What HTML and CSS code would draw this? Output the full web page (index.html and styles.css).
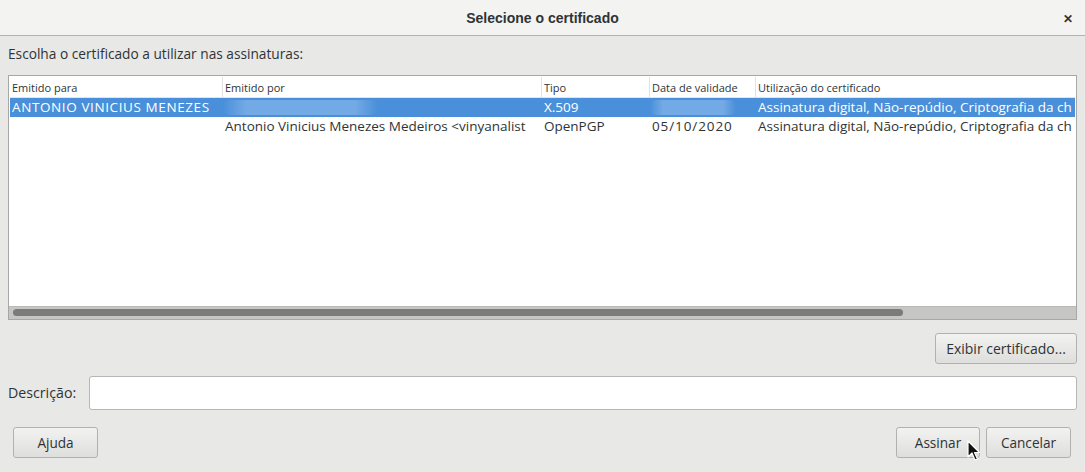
FILE: index.html
```html
<!DOCTYPE html>
<html lang="pt">
<head>
<meta charset="utf-8">
<title>Selecione o certificado</title>
<link rel="stylesheet" href="styles.css">
</head>
<body>
<div class="window">
  <header class="titlebar">
    <span class="title">Selecione o certificado</span>
    <span class="close">✕</span>
  </header>
  <main class="content">
    <div class="prompt">Escolha o certificado a utilizar nas assinaturas:</div>
    <div class="table">
      <div class="thead">
        <div class="c c1">Emitido para</div>
        <div class="c c2">Emitido por</div>
        <div class="c c3">Tipo</div>
        <div class="c c4">Data de validade</div>
        <div class="c c5">Utilização do certificado</div>
      </div>
      <div class="row selected">
        <div class="c c1"><span class="caps">ANTONIO VINICIUS MENEZES</span></div>
        <div class="c c2"><span class="blur b2"></span></div>
        <div class="c c3">X.509</div>
        <div class="c c4"><span class="blur b4"></span></div>
        <div class="c c5">Assinatura digital, Não-repúdio, Criptografia da ch</div>
      </div>
      <div class="row">
        <div class="c c1"></div>
        <div class="c c2">Antonio Vinicius Menezes Medeiros &lt;vinyanalist</div>
        <div class="c c3">OpenPGP</div>
        <div class="c c4"><span class="date">05/10/2020</span></div>
        <div class="c c5">Assinatura digital, Não-repúdio, Criptografia da ch</div>
      </div>
      <div class="fill"></div>
      <div class="hscroll"><div class="thumb"></div></div>
    </div>
    <div class="actions">
      <button class="btn btn-view">Exibir certificado...</button>
    </div>
    <div class="desc">
      <label class="desc-label">Descrição:</label>
      <div class="input"></div>
    </div>
    <div class="footer">
      <button class="btn btn-help">Ajuda</button>
      <div class="spacer"></div>
      <button class="btn btn-sign">Assinar</button>
      <button class="btn btn-cancel">Cancelar</button>
    </div>
  </main>
  <svg class="cursor" width="14" height="22" viewBox="0 0 14 22"><path d="M1 1 L1 17 L5 13 L8 20 L10.5 19 L7.5 12.5 L12.5 12.5 Z" fill="#111" stroke="#fff" stroke-width="1.2" stroke-linejoin="round"/></svg>
</div>
</body>
</html>
```
FILE: styles.css
```css
* { box-sizing: border-box; }
html, body { margin: 0; padding: 0; }
body {
  width: 1085px;
  height: 472px;
  overflow: hidden;
  font-family: "Open Sans", "Noto Sans", sans-serif;
  color: #2e3436;
  background: #e8e8e7;
}
.window {
  position: relative;
  width: 1085px;
  height: 472px;
  display: flex;
  flex-direction: column;
}
.titlebar {
  height: 36px;
  flex: none;
  background: #f3f3f2;
  border-bottom: 1px solid #b3b3b1;
  display: flex;
  align-items: center;
  justify-content: center;
  position: relative;
}
.title {
  font-family: "Liberation Sans", sans-serif;
  font-weight: bold;
  font-size: 14px;
  color: #2e3436;
}
.close {
  position: absolute;
  right: 12px;
  top: 10px;
  font-size: 12px;
  font-weight: bold;
  color: #2e3436;
}
.content {
  flex: 1;
  display: flex;
  flex-direction: column;
  padding: 0 8px;
}
.prompt {
  font-size: 13.7px;
  height: 39px;
  line-height: 36px;
  color: #2e3436;
}
.table {
  height: 245px;
  border: 1px solid #a7a7a5;
  background: #fff;
  display: flex;
  flex-direction: column;
  padding: 1px 1px 0 1px;
}
.thead {
  display: flex;
  height: 21px;
  border-bottom: 1px solid #e4e4e2;
  font-size: 11px;
  color: #2e3436;
}
.thead .c {
  line-height: 21px;
  border-right: 1px solid #e2e2e0;
  padding-left: 2px;
}
.thead .c5 { border-right: none; }
.row {
  display: flex;
  height: 19px;
  font-size: 13.5px;
  line-height: 19px;
  color: #2e3436;
}
.row .c { padding-left: 2px; }
.row.selected {
  background: #4a8fd9;
  color: #fff;
}
.caps { letter-spacing: 0.6px; }
.date { letter-spacing: 0.9px; }
.c { white-space: nowrap; overflow: hidden; flex: none; position: relative; }
.c1 { width: 213px; }
.c2 { width: 319px; }
.c3 { width: 108px; }
.c4 { width: 106px; }
.c5 { flex: 1; }
.blur {
  position: absolute;
  top: 2px;
  height: 15px;
  border-radius: 6px;
  background: linear-gradient(90deg, rgba(140,185,235,0.0), rgba(120,172,230,0.9) 15%, rgba(120,172,230,0.9) 85%, rgba(140,185,235,0));
}
.b2 { left: 0; width: 155px; }
.b4 { left: 0; width: 86px; }
.fill { flex: 1; }
.hscroll {
  height: 13px;
  background: #c6c6c4;
  border-top: 1px solid #b9b9b7;
  margin: 0 -1px;
  padding: 2px 0 0 4px;
}
.thumb {
  width: 890px;
  height: 7px;
  background: #7b7c7a;
  border-radius: 4px;
}
.btn {
  font-family: "Open Sans", "Noto Sans", sans-serif;
  font-size: 13.6px;
  color: #2e3436;
  height: 31px;
  border: 1px solid #b1b1af;
  border-radius: 3px;
  background: linear-gradient(#f2f2f1, #dededc);
  padding: 0;
}
.actions {
  display: flex;
  justify-content: flex-end;
  margin-top: 13px;
}
.btn-view { width: 142px; font-size: 14px; }
.desc {
  display: flex;
  align-items: center;
  margin-top: 12px;
}
.desc-label {
  font-size: 14.2px;
  width: 81px;
  padding-bottom: 2px;
}
.input {
  flex: 1;
  height: 34px;
  background: #fff;
  border: 1px solid #b6b6b4;
  border-radius: 3px;
}
.footer {
  display: flex;
  margin-top: 17px;
  padding: 0 6px 0 5px;
}
.spacer { flex: 1; }
.btn-help { width: 85px; }
.btn-sign { width: 84px; margin-right: 6px; }
.btn-cancel { width: 85px; }
.cursor {
  position: absolute;
  left: 967px;
  top: 440px;
}
```
